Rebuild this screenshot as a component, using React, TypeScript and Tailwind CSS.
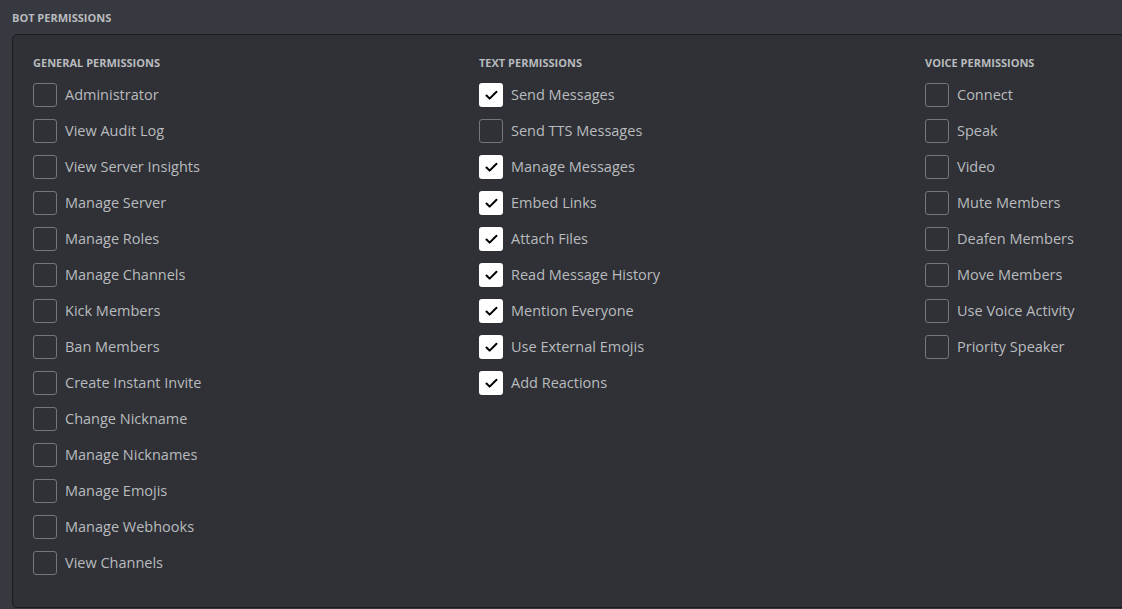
import React from 'react';

type Perm = { label: string; checked?: boolean };

const COLUMNS: { title: string; items: Perm[] }[] = [
  {
    title: 'General Permissions',
    items: [
      { label: 'Administrator' },
      { label: 'View Audit Log' },
      { label: 'View Server Insights' },
      { label: 'Manage Server' },
      { label: 'Manage Roles' },
      { label: 'Manage Channels' },
      { label: 'Kick Members' },
      { label: 'Ban Members' },
      { label: 'Create Instant Invite' },
      { label: 'Change Nickname' },
      { label: 'Manage Nicknames' },
      { label: 'Manage Emojis' },
      { label: 'Manage Webhooks' },
      { label: 'View Channels' },
    ],
  },
  {
    title: 'Text Permissions',
    items: [
      { label: 'Send Messages', checked: true },
      { label: 'Send TTS Messages' },
      { label: 'Manage Messages', checked: true },
      { label: 'Embed Links', checked: true },
      { label: 'Attach Files', checked: true },
      { label: 'Read Message History', checked: true },
      { label: 'Mention Everyone', checked: true },
      { label: 'Use External Emojis', checked: true },
      { label: 'Add Reactions', checked: true },
    ],
  },
  {
    title: 'Voice Permissions',
    items: [
      { label: 'Connect' },
      { label: 'Speak' },
      { label: 'Video' },
      { label: 'Mute Members' },
      { label: 'Deafen Members' },
      { label: 'Move Members' },
      { label: 'Use Voice Activity' },
      { label: 'Priority Speaker' },
    ],
  },
];

const Checkbox = ({ checked }: { checked?: boolean }) => (
  <div
    className={`w-6 h-6 rounded-[3px] flex items-center justify-center flex-shrink-0 ${
      checked ? 'bg-white' : 'border border-[#72767d]'
    }`}
  >
    {checked && (
      <svg width="15" height="15" viewBox="0 0 24 24" fill="none" stroke="#000" strokeWidth="3.2" strokeLinecap="round" strokeLinejoin="round">
        <path d="M20 6 9 17l-5-5" />
      </svg>
    )}
  </div>
);

export default function App() {
  return (
    <div className="w-[1122px] h-[609px] bg-[#36393f] overflow-hidden font-['Open_Sans',sans-serif]">
      <div className="h-[34px] pl-3 pt-[11px] text-[11px] leading-[14px] font-bold uppercase text-[#b9bbbe]">
        Bot Permissions
      </div>

      <div className="ml-3 w-[1130px] h-[574px] bg-[#2f3136] border border-[#1b1c1f] rounded-tl-[5px] rounded-bl-[5px] pl-5 pt-[21px] flex">
        {COLUMNS.map((col) => (
          <div key={col.title} className="w-[446px] flex-shrink-0">
            <h3 className="text-[11px] leading-[14px] font-bold uppercase text-[#b9bbbe] mb-[13px]">
              {col.title}
            </h3>
            <div className="flex flex-col gap-3">
              {col.items.map((item) => (
                <div key={item.label} className="flex items-center gap-2 h-6">
                  <Checkbox checked={item.checked} />
                  <span className="text-[14.5px] leading-6 text-[#b9bbbe]">{item.label}</span>
                </div>
              ))}
            </div>
          </div>
        ))}
      </div>
    </div>
  );
}
